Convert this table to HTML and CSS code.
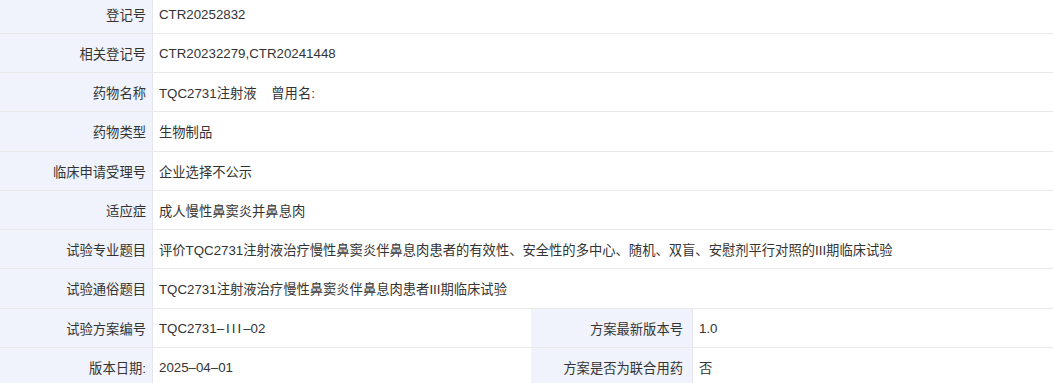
FILE: index.html
```html
<!DOCTYPE html>
<html lang="zh-CN">
<head>
<meta charset="utf-8">
<title>试验信息</title>
<link rel="stylesheet" href="styles.css">
</head>
<body>
<div class="sheet">
  <div class="row"><div class="label">登记号</div><div class="value">CTR20252832</div></div>
  <div class="row"><div class="label">相关登记号</div><div class="value">CTR20232279,CTR20241448</div></div>
  <div class="row"><div class="label">药物名称</div><div class="value">TQC2731注射液&nbsp;&nbsp;&nbsp;&nbsp;曾用名:</div></div>
  <div class="row tall"><div class="label">药物类型</div><div class="value">生物制品</div></div>
  <div class="row"><div class="label">临床申请受理号</div><div class="value">企业选择不公示</div></div>
  <div class="row"><div class="label">适应症</div><div class="value">成人慢性鼻窦炎并鼻息肉</div></div>
  <div class="row"><div class="label">试验专业题目</div><div class="value">评价TQC2731注射液治疗慢性鼻窦炎伴鼻息肉患者的有效性、安全性的多中心、随机、双盲、安慰剂平行对照的III期临床试验</div></div>
  <div class="row tall"><div class="label">试验通俗题目</div><div class="value">TQC2731注射液治疗慢性鼻窦炎伴鼻息肉患者III期临床试验</div></div>
  <div class="row"><div class="label">试验方案编号</div><div class="value half">TQC2731–<span class="roman">III</span>–02</div><div class="label second">方案最新版本号</div><div class="value">1.0</div></div>
  <div class="row"><div class="label">版本日期:</div><div class="value half">2025–04–01</div><div class="label second">方案是否为联合用药</div><div class="value">否</div></div>
</div>
</body>
</html>
```

FILE: styles.css
```css
html, body {
  margin: 0;
  padding: 0;
  background: #ffffff;
}

body {
  font-family: "Liberation Sans", "Noto Sans CJK SC", sans-serif;
  font-size: 13.3px;
  color: #333333;
  overflow: hidden;
}

.sheet {
  margin-top: -5px;
}

.row {
  display: flex;
  height: 39px;
  box-sizing: border-box;
  border-bottom: 1px solid #e9e9e9;
}

.row.tall {
  height: 40px;
}

.label {
  width: 153px;
  flex: none;
  box-sizing: border-box;
  background: #f0f3fb;
  border-right: 1px solid #e4e7ef;
  display: flex;
  align-items: center;
  justify-content: flex-end;
  padding-right: 6px;
  white-space: nowrap;
}

.label.second {
  width: 162px;
  padding-right: 9px;
  border-right: 1px solid #e4e7ef;
}

.value {
  flex: 1;
  display: flex;
  align-items: center;
  padding-left: 6px;
  white-space: nowrap;
}

.value.half {
  flex: none;
  width: 378px;
  box-sizing: border-box;
}

.roman {
  letter-spacing: 2px;
  padding-left: 2px;
}
```
